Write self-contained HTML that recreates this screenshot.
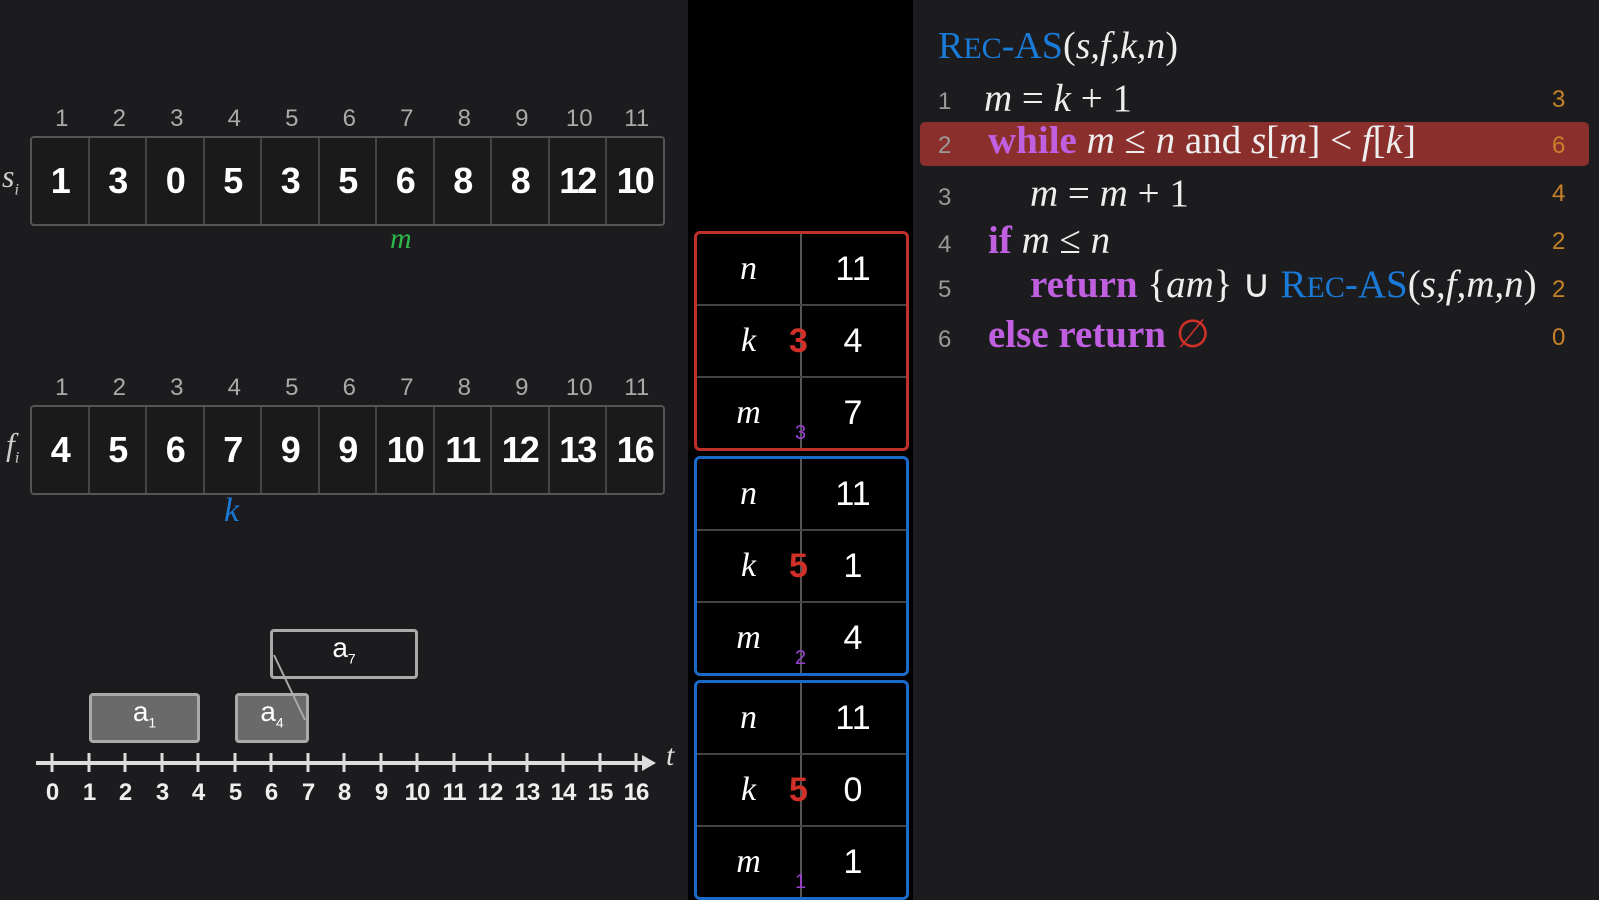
<!DOCTYPE html>
<html><head><meta charset="utf-8"><style>
body{margin:0;width:1599px;height:900px;overflow:hidden;background:#1c1c1e;font-family:"Liberation Sans",sans-serif;position:relative}
.a{position:absolute}
.mid{left:688px;top:0;width:225px;height:900px;background:#000}
.arr{display:flex;border:2px solid #555;border-radius:4px;background:#1a1a1a}
.arr div{width:55.5px;height:86px;border-right:2px solid #444;color:#fff;font-size:36px;font-weight:bold;display:flex;align-items:center;justify-content:center;letter-spacing:-2px}
.arr div:last-child{border-right:none}
.idx{display:flex;color:#aaa;font-size:24px}
.idx span{width:57.5px;text-align:center}
.frame{left:694px;width:209px;border:3px solid;border-radius:6px;background:#000}
.frame .r{height:70px;display:flex;border-bottom:2px solid #444;color:#fff;font-size:34px;align-items:center;position:relative}
.frame .r:last-child{border-bottom:none}
.frame .r .l{width:103px;text-align:center;font-family:"Liberation Serif",serif;font-style:italic}
.frame .r .v{flex:1;text-align:center}
.frame .vl{position:absolute;left:103px;top:0;bottom:0;width:2px;background:#555}
.code{font-family:"Liberation Serif",serif;font-size:39px;color:#eee;white-space:nowrap}
.ln{position:absolute;left:938px;color:#999;font-family:"Liberation Sans",sans-serif;font-size:24px}
.cnt{position:absolute;left:1552px;color:#c8822a;font-size:24px}
.kw{color:#c060e0;font-weight:bold}
.bl{color:#1a7ad8}
i{font-style:italic}
.box{border:3px solid #aaa;border-radius:4px;color:#fff;font-size:28px;text-align:center}
</style></head><body>
<div class="a mid"></div>

<div class="a idx" style="left:33px;top:105px"><span>1</span><span>2</span><span>3</span><span>4</span><span>5</span><span>6</span><span>7</span><span>8</span><span>9</span><span>10</span><span>11</span></div>
<div class="a" style="left:2px;top:158px;color:#ccc;font-size:32px;font-family:'Liberation Serif',serif;font-style:italic">s<sub style="font-size:16px">i</sub></div>
<div class="a arr" style="left:30px;top:136px"><div>1</div><div>3</div><div>0</div><div>5</div><div>3</div><div>5</div><div>6</div><div>8</div><div>8</div><div>12</div><div>10</div></div>
<div class="a" style="left:390px;top:222px;color:#2db84a;font-size:30px;font-family:'Liberation Serif',serif;font-style:italic">m</div>

<div class="a idx" style="left:33px;top:374px"><span>1</span><span>2</span><span>3</span><span>4</span><span>5</span><span>6</span><span>7</span><span>8</span><span>9</span><span>10</span><span>11</span></div>
<div class="a" style="left:6px;top:426px;color:#ccc;font-size:32px;font-family:'Liberation Serif',serif;font-style:italic">f<sub style="font-size:16px">i</sub></div>
<div class="a arr" style="left:30px;top:405px"><div>4</div><div>5</div><div>6</div><div>7</div><div>9</div><div>9</div><div>10</div><div>11</div><div>12</div><div>13</div><div>16</div></div>
<div class="a" style="left:224px;top:492px;color:#1a7ad8;font-size:34px;font-family:'Liberation Serif',serif;font-style:italic">k</div>

<div class="a box" style="left:270px;top:629px;width:142px;height:44px;background:#1c1c1e">a<sub style="font-size:14px">7</sub></div>
<div class="a box" style="left:89px;top:693px;width:105px;height:44px;background:#6a6a6a">a<sub style="font-size:14px">1</sub></div>
<div class="a box" style="left:235px;top:693px;width:68px;height:44px;background:#6a6a6a">a<sub style="font-size:14px">4</sub></div>
<svg class="a" style="left:0;top:600px" width="688" height="220">
<line x1="274" y1="55" x2="305" y2="120" stroke="#aaa" stroke-width="2"/>
<line x1="36" y1="163" x2="645" y2="163" stroke="#ddd" stroke-width="4"/>
<polygon points="642,155 656,163 642,171" fill="#ddd"/>
<g stroke="#ddd" stroke-width="3">
<line x1="52" y1="153" x2="52" y2="172"/><line x1="89" y1="153" x2="89" y2="172"/><line x1="125" y1="153" x2="125" y2="172"/><line x1="162" y1="153" x2="162" y2="172"/><line x1="198" y1="153" x2="198" y2="172"/><line x1="235" y1="153" x2="235" y2="172"/><line x1="271" y1="153" x2="271" y2="172"/><line x1="308" y1="153" x2="308" y2="172"/><line x1="344" y1="153" x2="344" y2="172"/><line x1="381" y1="153" x2="381" y2="172"/><line x1="417" y1="153" x2="417" y2="172"/><line x1="454" y1="153" x2="454" y2="172"/><line x1="490" y1="153" x2="490" y2="172"/><line x1="527" y1="153" x2="527" y2="172"/><line x1="563" y1="153" x2="563" y2="172"/><line x1="600" y1="153" x2="600" y2="172"/><line x1="636" y1="153" x2="636" y2="172"/></g>
<g fill="#eee" font-size="24" font-weight="bold" font-family="Liberation Sans" text-anchor="middle" letter-spacing="-1">
<text x="52" y="200">0</text><text x="89" y="200">1</text><text x="125" y="200">2</text><text x="162" y="200">3</text><text x="198" y="200">4</text><text x="235" y="200">5</text><text x="271" y="200">6</text><text x="308" y="200">7</text><text x="344" y="200">8</text><text x="381" y="200">9</text><text x="417" y="200">10</text><text x="454" y="200">11</text><text x="490" y="200">12</text><text x="527" y="200">13</text><text x="563" y="200">14</text><text x="600" y="200">15</text><text x="636" y="200">16</text></g>
<text x="666" y="165" fill="#ddd" font-size="30" font-family="Liberation Serif" font-style="italic">t</text>
</svg>

<div class="a frame" style="top:231px;border-color:#c0302a"><div class="vl"></div>
<div class="r"><span class="l">n</span><span class="v">11</span></div>
<div class="r"><span class="l">k</span><span class="v">4</span><span class="a" style="left:92px;color:#d03028;font-weight:bold">3</span></div>
<div class="r"><span class="l">m</span><span class="v">7</span><span class="a" style="left:98px;top:44px;color:#9a40d0;font-size:20px">3</span></div></div>
<div class="a frame" style="top:456px;border-color:#1a6ac8"><div class="vl"></div>
<div class="r"><span class="l">n</span><span class="v">11</span></div>
<div class="r"><span class="l">k</span><span class="v">1</span><span class="a" style="left:92px;color:#d03028;font-weight:bold">5</span></div>
<div class="r"><span class="l">m</span><span class="v">4</span><span class="a" style="left:98px;top:44px;color:#9a40d0;font-size:20px">2</span></div></div>
<div class="a frame" style="top:680px;border-color:#1a6ac8"><div class="vl"></div>
<div class="r"><span class="l">n</span><span class="v">11</span></div>
<div class="r"><span class="l">k</span><span class="v">0</span><span class="a" style="left:92px;color:#d03028;font-weight:bold">5</span></div>
<div class="r"><span class="l">m</span><span class="v">1</span><span class="a" style="left:98px;top:44px;color:#9a40d0;font-size:20px">1</span></div></div>

<div class="a" style="left:920px;top:122px;width:669px;height:44px;background:#8b2f2c;border-radius:5px"></div>
<div class="a code" style="left:938px;top:24px;font-size:38px"><span class="bl">R<span style="font-size:30px">EC</span>-AS</span>(<i>s,f,k,n</i>)</div>
<div class="ln" style="top:88px">1</div><div class="a code" style="left:984px;top:76px"><i>m</i> = <i>k</i> + 1</div>
<div class="ln" style="top:132px">2</div><div class="a code" style="left:988px;top:118px"><span class="kw">while</span> <i>m</i> ≤ <i>n</i> and <i>s</i>[<i>m</i>] &lt; <i>f</i>[<i>k</i>]</div>
<div class="ln" style="top:184px">3</div><div class="a code" style="left:1030px;top:171px"><i>m</i> = <i>m</i> + 1</div>
<div class="ln" style="top:231px">4</div><div class="a code" style="left:988px;top:218px"><span class="kw">if</span> <i>m</i> ≤ <i>n</i></div>
<div class="ln" style="top:276px">5</div><div class="a code" style="left:1030px;top:262px"><span class="kw">return</span> {<i>am</i>} ∪ <span class="bl">R<span style="font-size:30px">EC</span>-AS</span>(<i>s,f,m,n</i>)</div>
<div class="ln" style="top:326px">6</div><div class="a code" style="left:988px;top:312px"><span class="kw">else return</span> <span style="color:#d03028">∅</span></div>
<div class="cnt" style="top:86px">3</div><div class="cnt" style="top:132px">6</div><div class="cnt" style="top:180px">4</div><div class="cnt" style="top:228px">2</div><div class="cnt" style="top:276px">2</div><div class="cnt" style="top:324px">0</div>
</body></html>
